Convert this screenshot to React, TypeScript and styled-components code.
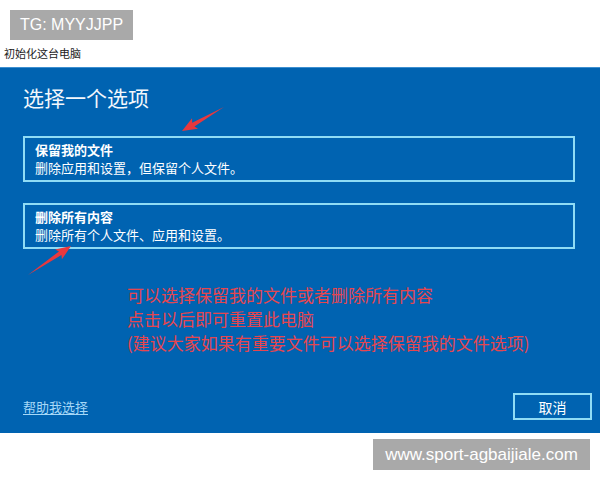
import styled, { createGlobalStyle } from "styled-components";

const GlobalStyle = createGlobalStyle`
  html, body {
    margin: 0;
    padding: 0;
    background: #ffffff;
  }
  body {
    font-family: "Noto Sans CJK SC", "Liberation Sans", sans-serif;
  }
`;

const Page = styled.div`
  position: relative;
  width: 600px;
  height: 480px;
  overflow: hidden;
  display: flex;
  flex-direction: column;
`;

const Badge = styled.div`
  align-self: flex-start;
  margin: 10px 0 0 10px;
  height: 30px;
  padding: 0 10px;
  display: flex;
  align-items: center;
  background: #a9a9a9;
  color: #ffffff;
  font-family: "Liberation Sans", Arial, sans-serif;
  font-size: 16px;
`;

const WindowLabel = styled.div`
  margin: 5px 0 0 4px;
  height: 22px;
  line-height: 16px;
  font-size: 11px;
  color: #222222;
`;

const Panel = styled.div`
  height: 366px;
  box-sizing: border-box;
  background: #0063b1;
  border-top: 1px solid #3d8fd0;
  padding: 0 8px 13px 23px;
  display: flex;
  flex-direction: column;
`;

const Title = styled.h1`
  margin: 17px 0 0;
  font-size: 21px;
  font-weight: 400;
  line-height: 25px;
  color: #f2f7fc;
`;

const OptionList = styled.div`
  margin-top: 26px;
  width: 552px;
  display: flex;
  flex-direction: column;
  gap: 21px;
`;

const OptionBox = styled.div`
  box-sizing: border-box;
  height: 46px;
  border: 2px solid #8fdcf5;
  padding: 3px 10px;
  color: #ffffff;
  font-size: 13px;
  line-height: 18px;
`;

const OptionName = styled.div`
  font-weight: 700;
`;

const OptionDesc = styled.div`
  font-weight: 400;
`;

const Note = styled.div`
  margin: 34px 0 0 104px;
  color: #e6464f;
  font-size: 17px;
  line-height: 24px;
`;

const Footer = styled.div`
  margin-top: auto;
  display: flex;
  align-items: center;
  justify-content: space-between;
`;

const HelpLink = styled.a`
  color: #a6d8f7;
  font-size: 13px;
  text-decoration: underline;
  text-underline-offset: 2px;
`;

const CancelButton = styled.button`
  width: 79px;
  height: 27px;
  box-sizing: border-box;
  border: 2px solid #8fdcf5;
  background: #0063b1;
  color: #ffffff;
  font-family: "Noto Sans CJK SC", sans-serif;
  font-size: 14px;
  padding: 0;
`;

const Watermark = styled.div`
  align-self: flex-end;
  margin: 6px 10px 0 0;
  width: 217px;
  height: 31px;
  display: flex;
  align-items: center;
  justify-content: center;
  background: #a9a9a9;
  color: #ffffff;
  font-family: "Liberation Sans", Arial, sans-serif;
  font-size: 17px;
`;

const Overlay = styled.svg`
  position: absolute;
  left: 0;
  top: 0;
  pointer-events: none;
`;

type ArrowProps = { x1: number; y1: number; x2: number; y2: number };

function Arrow({ x1, y1, x2, y2 }: ArrowProps) {
  const dx = x2 - x1;
  const dy = y2 - y1;
  const L = Math.sqrt(dx * dx + dy * dy);
  const angle = (Math.atan2(dy, dx) * 180) / Math.PI;
  const d = `M0,0 L${L - 13},-2.2 L${L - 15},-6 L${L},0 L${L - 15},6 L${L - 13},2.2 Z`;
  return (
    <path
      d={d}
      fill="#e8383d"
      transform={`translate(${x1} ${y1}) rotate(${angle})`}
    />
  );
}

const options = [
  { name: "保留我的文件", desc: "删除应用和设置，但保留个人文件。" },
  { name: "删除所有内容", desc: "删除所有个人文件、应用和设置。" },
];

export default function App() {
  return (
    <>
      <GlobalStyle />
      <Page>
        <Badge>TG: MYYJJPP</Badge>
        <WindowLabel>初始化这台电脑</WindowLabel>
        <Panel>
          <Title>选择一个选项</Title>
          <OptionList>
            {options.map((o) => (
              <OptionBox key={o.name}>
                <OptionName>{o.name}</OptionName>
                <OptionDesc>{o.desc}</OptionDesc>
              </OptionBox>
            ))}
          </OptionList>
          <Note>
            <div>可以选择保留我的文件或者删除所有内容</div>
            <div>点击以后即可重置此电脑</div>
            <div>(建议大家如果有重要文件可以选择保留我的文件选项)</div>
          </Note>
          <Footer>
            <HelpLink>帮助我选择</HelpLink>
            <CancelButton>取消</CancelButton>
          </Footer>
        </Panel>
        <Watermark>www.sport-agbaijiale.com</Watermark>
        <Overlay width="600" height="480" viewBox="0 0 600 480">
          <Arrow x1={224} y1={107} x2={182} y2={131} />
          <Arrow x1={28} y1={275} x2={71} y2={246} />
        </Overlay>
      </Page>
    </>
  );
}
